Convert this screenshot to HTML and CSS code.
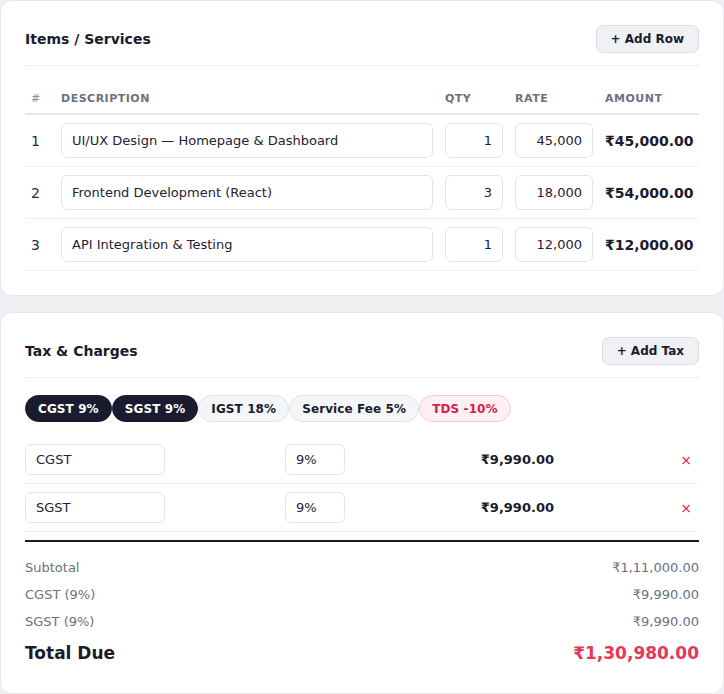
FILE: index.html
```html
<!DOCTYPE html>
<html lang="en">
<head>
<meta charset="utf-8">
<title>Invoice Items</title>
<link rel="stylesheet" href="styles.css">
</head>
<body>
<div class="page">
  <section class="card">
    <div class="card-head">
      <h2 class="card-title">Items / Services</h2>
      <button class="btn">+ Add Row</button>
    </div>
    <table class="items">
      <colgroup>
        <col class="c-num"><col class="c-desc"><col class="c-qty"><col class="c-rate"><col class="c-amt">
      </colgroup>
      <thead>
        <tr><th>#</th><th>Description</th><th>Qty</th><th>Rate</th><th>Amount</th></tr>
      </thead>
      <tbody>
        <tr>
          <td class="num">1</td>
          <td><div class="field">UI/UX Design — Homepage &amp; Dashboard</div></td>
          <td><div class="field right">1</div></td>
          <td><div class="field right">45,000</div></td>
          <td class="amt">₹45,000.00</td>
        </tr>
        <tr>
          <td class="num">2</td>
          <td><div class="field">Frontend Development (React)</div></td>
          <td><div class="field right">3</div></td>
          <td><div class="field right">18,000</div></td>
          <td class="amt">₹54,000.00</td>
        </tr>
        <tr>
          <td class="num">3</td>
          <td><div class="field">API Integration &amp; Testing</div></td>
          <td><div class="field right">1</div></td>
          <td><div class="field right">12,000</div></td>
          <td class="amt">₹12,000.00</td>
        </tr>
      </tbody>
    </table>
  </section>

  <section class="card">
    <div class="card-head">
      <h2 class="card-title">Tax &amp; Charges</h2>
      <button class="btn">+ Add Tax</button>
    </div>
    <div class="chips">
      <span class="chip on">CGST 9%</span>
      <span class="chip on">SGST 9%</span>
      <span class="chip">IGST 18%</span>
      <span class="chip">Service Fee 5%</span>
      <span class="chip neg">TDS -10%</span>
    </div>
    <div class="tax-row">
      <div class="field small name">CGST</div>
      <div class="field small rate">9%</div>
      <div class="tax-amt">₹9,990.00</div>
      <div class="remove">×</div>
    </div>
    <div class="tax-row">
      <div class="field small name">SGST</div>
      <div class="field small rate">9%</div>
      <div class="tax-amt">₹9,990.00</div>
      <div class="remove">×</div>
    </div>
    <div class="totals">
      <div class="t-row"><span>Subtotal</span><span>₹1,11,000.00</span></div>
      <div class="t-row"><span>CGST (9%)</span><span>₹9,990.00</span></div>
      <div class="t-row"><span>SGST (9%)</span><span>₹9,990.00</span></div>
      <div class="t-row grand"><span>Total Due</span><span class="due">₹1,30,980.00</span></div>
    </div>
  </section>
</div>
</body>
</html>
```

FILE: styles.css
```css
* { box-sizing: border-box; }

html, body {
  margin: 0;
  padding: 0;
  background: #eff0f4;
  font-family: "DejaVu Sans", sans-serif;
  color: #1a1b2e;
}

.page {
  display: flex;
  flex-direction: column;
  gap: 16px;
}

.card {
  background: #ffffff;
  border: 1px solid #e6e8ec;
  border-radius: 12px;
  padding: 24px;
}

.card-head {
  display: flex;
  justify-content: space-between;
  align-items: center;
  padding-bottom: 12px;
  border-bottom: 1px solid #eceef2;
}

.card-title {
  margin: 0;
  font-size: 14px;
  font-weight: 700;
  color: #1a1b2e;
}

.btn {
  height: 28px;
  padding: 0 14px;
  border: 1px solid #d9dce3;
  border-radius: 7px;
  background: #f0f1f5;
  font-family: "DejaVu Sans", sans-serif;
  font-size: 12px;
  font-weight: 700;
  color: #1a1b2e;
}

/* items table */
.items {
  width: 100%;
  margin-top: 16px;
  border-collapse: collapse;
  table-layout: fixed;
}
.c-num { width: 30px; }
.c-qty { width: 70px; }
.c-rate { width: 90px; }
.c-amt { width: 100px; }

.items th {
  padding: 10px 6px 8px;
  text-align: left;
  font-size: 11px;
  line-height: 13px;
  font-weight: 700;
  letter-spacing: 0.5px;
  text-transform: uppercase;
  color: #6b7180;
  border-bottom: 2px solid #e5e7eb;
}
.items th:first-child { color: #8a8f9c; font-weight: 400; }

.items td {
  padding: 8px 6px;
  border-bottom: 1px solid #eef0f3;
  vertical-align: middle;
}
.items td.num {
  font-size: 14px;
  color: #2a2b38;
}
.items td.amt {
  font-size: 14px;
  font-weight: 700;
  color: #1a1b2e;
  white-space: nowrap;
}

.field {
  height: 35px;
  padding: 0 10px;
  border: 1px solid #e3e5ea;
  border-radius: 6px;
  background: #fff;
  font-size: 13px;
  color: #1f2233;
  display: flex;
  align-items: center;
  white-space: nowrap;
  overflow: hidden;
}
.field.right { justify-content: flex-end; }
.field.small { height: 31px; }

/* chips */
.chips {
  display: flex;
  gap: 0;
  margin-top: 17px;
  margin-bottom: 14px;
}
.chip {
  display: inline-flex;
  align-items: center;
  height: 27px;
  padding: 0 12px;
  border: 1px solid #dfe2e8;
  border-radius: 14px;
  background: #f5f6f8;
  font-size: 12px;
  font-weight: 700;
  letter-spacing: 0.1px;
  color: #1a1b2e;
}
.chip.on {
  background: #1a1b2e;
  border-color: #1a1b2e;
  color: #ffffff;
}
.chip.neg {
  background: #fff0f3;
  border-color: #fbc6cf;
  color: #d4204a;
}

/* tax rows */
.tax-row {
  display: grid;
  grid-template-columns: 260px 135px 134px 1fr;
  align-items: center;
  padding: 8px 0;
  border-bottom: 1px solid #eef0f3;
}
.tax-row .name { width: 140px; }
.tax-row .rate { width: 60px; }
.tax-amt {
  text-align: right;
  font-size: 13px;
  font-weight: 700;
  color: #1a1b2e;
}
.remove {
  text-align: right;
  padding-right: 7px;
  font-size: 14px;
  color: #e11d48;
}

/* totals */
.totals {
  margin-top: 8px;
  border-top: 2px solid #1a1b2e;
  padding-top: 12px;
}
.t-row {
  display: flex;
  justify-content: space-between;
  padding: 6px 0;
  font-size: 13px;
  line-height: 15px;
  color: #6b7180;
}
.t-row.grand {
  padding: 8px 0 6px;
  font-size: 17px;
  line-height: 20px;
  font-weight: 700;
  color: #1a1b2e;
}
.t-row .due { color: #e8365a; }
```
